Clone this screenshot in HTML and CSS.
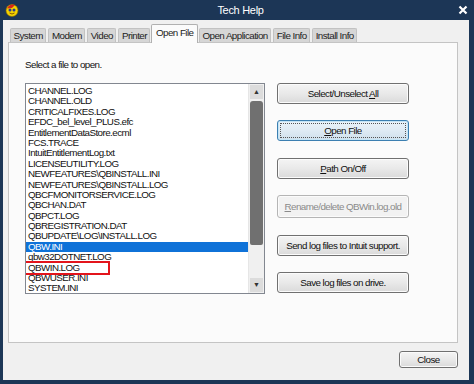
FILE: index.html
```html
<!DOCTYPE html>
<html lang="en">
<head>
    <meta charset="UTF-8">
    <title>Tech Help</title>
    <link rel="stylesheet" href="styles.css">
</head>
<body>
    <div class="window">
        <div class="titlebar">
            <svg class="app-icon" width="14" height="14" viewBox="0 0 14 14">
                <circle cx="7" cy="7.5" r="6" fill="#f5d300" stroke="#8a6d00" stroke-width="0.6"></circle>
                <path d="M2 5.5 A6 6 0 0 1 10 2 L7 5 Z" fill="#d8261c"></path>
                <circle cx="5" cy="7" r="1.5" fill="#2b3a8c"></circle>
                <circle cx="9" cy="7" r="1.5" fill="#2b3a8c"></circle>
                <path d="M4.5 10 Q7 12 9.5 10" fill="none" stroke="#6b3b00" stroke-width="0.8"></path>
            </svg>
            <span class="title">Tech Help</span>
            <svg class="close-x" width="10" height="10" viewBox="0 0 10 10">
                <path d="M1.5 1.5 L8.5 8.5 M8.5 1.5 L1.5 8.5" stroke="#ffffff" stroke-width="2.2"></path>
            </svg>
        </div>

        <div class="client">
            <div class="tabs">
                <div class="tab">System</div>
                <div class="tab">Modem</div>
                <div class="tab">Video</div>
                <div class="tab">Printer</div>
                <div class="tab active">Open File</div>
                <div class="tab">Open Application</div>
                <div class="tab">File Info</div>
                <div class="tab">Install Info</div>
            </div>

            <div class="panel">
                <p class="prompt">Select a file to open.</p>
                <div class="panel-row">
                    <div class="listbox">
                        <ul class="items">
                            <li>CHANNEL.LOG</li>
                            <li>CHANNEL.OLD</li>
                            <li>CRITICALFIXES.LOG</li>
                            <li>EFDC_bel_level_PLUS.efc</li>
                            <li>EntitlementDataStore.ecml</li>
                            <li>FCS.TRACE</li>
                            <li>IntuitEntitlementLog.txt</li>
                            <li>LICENSEUTILITY.LOG</li>
                            <li>NEWFEATURES\QBINSTALL.INI</li>
                            <li>NEWFEATURES\QBINSTALL.LOG</li>
                            <li>QBCFMONITORSERVICE.LOG</li>
                            <li>QBCHAN.DAT</li>
                            <li>QBPCT.LOG</li>
                            <li>QBREGISTRATION.DAT</li>
                            <li>QBUPDATE\LOG\INSTALL.LOG</li>
                            <li class="selected">QBW.INI</li>
                            <li>qbw32DOTNET.LOG</li>
                            <li><span class="marked">QBWIN.LOG</span></li>
                            <li>QBWUSER.INI</li>
                            <li>SYSTEM.INI</li>
                        </ul>
                        <div class="scrollbar">
                            <div class="arrow up">&#9650;</div>
                            <div class="track"><div class="thumb"></div></div>
                            <div class="arrow down">&#9660;</div>
                        </div>
                    </div>

                    <div class="actions">
                        <button class="btn">Select/Unselect <u>A</u>ll</button>
                        <button class="btn default"><span class="focus"><u>O</u>pen File</span></button>
                        <button class="btn"><u>P</u>ath On/Off</button>
                        <button class="btn" disabled><u>R</u>ename/delete QBWin.log.old</button>
                        <button class="btn">Send log files to Intuit support.</button>
                        <button class="btn">Save log files on drive.</button>
                    </div>
                </div>
            </div>

            <div class="footer">
                <button class="btn close-btn">Close</button>
            </div>
        </div>
    </div>
</body>
</html>
```

FILE: styles.css
```css
* {
    margin: 0;
    padding: 0;
    box-sizing: border-box;
}

body {
    width: 474px;
    height: 384px;
    overflow: hidden;
    background-color: #1c3656;
    font-family: 'Liberation Sans', Arial, sans-serif;
    font-size: 9.8px;
    letter-spacing: -0.55px;
    color: #111;
}

.window {
    display: flex;
    flex-direction: column;
    height: 100%;
}

/* Title bar */
.titlebar {
    height: 20px;
    display: flex;
    align-items: center;
    padding: 0 6px 0 5px;
    color: #fff;
}

.app-icon {
    flex: none;
}

.title {
    flex: 1;
    text-align: center;
    font-size: 11px;
    letter-spacing: -0.3px;
    padding-left: 4px;
}

.close-x {
    flex: none;
}

/* Client area */
.client {
    margin: 0 5px 4px 3px;
    height: 360px;
    background-color: #f0f0f0;
    padding: 4px 11px 0 5px;
    display: flex;
    flex-direction: column;
}

.tabs {
    display: flex;
    align-items: flex-end;
    gap: 2px;
    height: 18px;
    padding-left: 2px;
    position: relative;
    z-index: 1;
}

.tab {
    height: 14px;
    line-height: 13px;
    padding: 0 2.5px;
    background-color: #d6d6d6;
    border: 1px solid #c2c2c2;
    border-bottom: none;
    border-radius: 2px 2px 0 0;
    color: #222;
}

.tab.active {
    height: 19px;
    line-height: 16px;
    margin: 0 -1px -1px;
    padding: 0 3.5px;
    background-color: #fbfbfb;
    border-color: #b0b0b0;
}

.panel {
    height: 301px;
    background-color: #fbfbfb;
    border: 1px solid #c4c4c4;
    padding: 16px 0 0 16px;
}

.prompt {
    line-height: 12px;
    margin-bottom: 12px;
}

.panel-row {
    display: flex;
    gap: 12px;
}

/* List box */
.listbox {
    width: 240px;
    height: 211px;
    background-color: #fff;
    border: 1px solid #828790;
    display: flex;
}

.items {
    flex: 1;
    list-style: none;
    padding-top: 2px;
    overflow: hidden;
}

.items li {
    height: 10.4px;
    line-height: 10.4px;
    padding-left: 2px;
    white-space: nowrap;
}

.items li.selected {
    background-color: #0f72d8;
    color: #fff;
}

.marked {
    display: inline-block;
    width: 84px;
    margin-left: -4px;
    padding-left: 4px;
    outline: 2px solid #e3141b;
    line-height: 10px;
}

.scrollbar {
    width: 16px;
    display: flex;
    flex-direction: column;
    background-color: #f0f0f0;
    border-left: 1px solid #e6e6e6;
}

.arrow {
    height: 14px;
    margin: 1px;
    font-size: 7px;
    letter-spacing: 0;
    line-height: 14px;
    text-align: center;
    color: #333;
    background-color: #dcdcdc;
}

.track {
    flex: 1;
    padding: 1px 1px 0;
}

.thumb {
    height: 144px;
    background-color: #707070;
    border-radius: 3px 3px 2px 2px;
}

/* Buttons */
.actions {
    display: flex;
    flex-direction: column;
    gap: 16.4px;
    width: 132px;
}

.btn {
    height: 21px;
    font-family: inherit;
    font-size: inherit;
    letter-spacing: inherit;
    white-space: nowrap;
    color: #111;
    background: linear-gradient(#f4f4f4, #e9e9e9 50%, #dadada);
    border: 1px solid #707070;
    border-radius: 3px;
    box-shadow: inset 0 0 0 1px #fbfbfb;
}

.btn u {
    text-decoration-thickness: 1px;
    text-underline-offset: 1px;
}

.btn.default {
    border-color: #3c7fb1;
    background: linear-gradient(#eaf3fa, #dfebf4 50%, #cfe0ec);
    box-shadow: inset 0 0 0 1px #c4e5f6;
    padding: 2px;
}

.btn .focus {
    display: block;
    height: 100%;
    line-height: 13px;
    border: 1px dotted #555;
}

.btn:disabled {
    color: #8a8a8a;
    background: #f2f2f2;
    border-color: #b5b5b5;
    height: 23px;
}

.footer {
    display: flex;
    justify-content: flex-end;
    padding-top: 8px;
}

.close-btn {
    width: 59px;
    height: 17px;
}
```
